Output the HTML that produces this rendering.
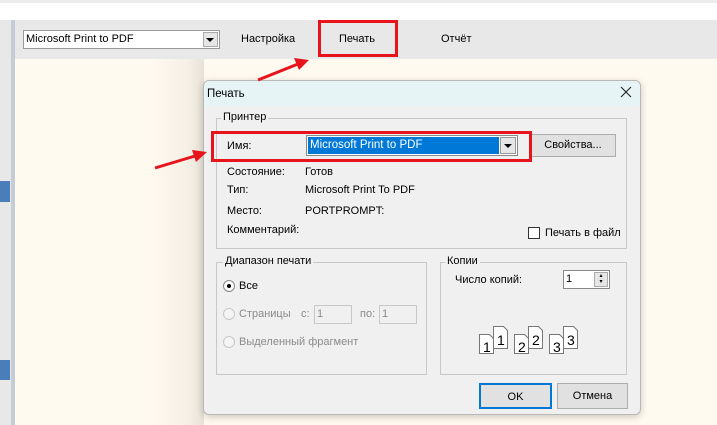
<!DOCTYPE html>
<html><head><meta charset="utf-8"><style>
*{margin:0;padding:0;box-sizing:border-box}
body{width:717px;height:425px;position:relative;overflow:hidden;background:#fffaf0;font-family:"Liberation Sans",sans-serif;font-size:11px;color:#000}
.a{position:absolute}
.t{position:absolute;white-space:nowrap}
.g{color:#8a8a8a}
fieldset{position:absolute;border:1px solid #c8c8c8;border-radius:0}
.lg{position:absolute;background:#f0f0f0;padding:0 2px;top:-8px;left:6px}
.btn{position:absolute;border:1px solid #adadad;background:#e1e1e1;text-align:center}
.rad{position:absolute;width:12px;height:12px;border-radius:50%;border:1px solid #c8c8c8;background:#f4f4f4}
.inp{position:absolute;border:1px solid #c8c8c8;background:#f0f0f0;color:#8a8a8a;padding-left:2px;line-height:17px}
</style></head><body>
<div class="a" style="left:0;top:0;width:717px;height:3px;background:#ececec"></div>
<div class="a" style="left:0;top:3px;width:717px;height:17px;background:#fff"></div>
<div class="a" style="left:0;top:20px;width:717px;height:39px;background:#e8e8e8"></div>
<div class="a" style="left:0;top:59px;width:11px;height:366px;background:#e8e8e8"></div>
<div class="a" style="left:11px;top:20px;width:4px;height:405px;background:#c4ccd4"></div>
<div class="a" style="left:0;top:181px;width:10px;height:21px;background:#4a7ebb"></div>
<div class="a" style="left:0;top:360px;width:10px;height:20px;background:#4a7ebb"></div>
<div class="a" style="left:150px;top:59px;width:54px;height:366px;background:linear-gradient(90deg,rgba(0,0,0,0),rgba(60,50,30,0.05) 70%,rgba(60,50,30,0.12))"></div>
<!-- toolbar -->
<div class="a" style="left:23px;top:30px;width:197px;height:19px;background:#fff;border:1px solid #9a9a9a"></div>
<div class="t" style="left:26px;top:33px">Microsoft Print to PDF</div>
<div class="a" style="left:203px;top:32px;width:15px;height:15px;background:#e6e6e6;border:1px solid #aaa"></div>
<div class="a" style="left:206px;top:38px;border-left:4px solid transparent;border-right:4px solid transparent;border-top:4px solid #000"></div>
<div class="t" style="left:241px;top:33px">Настройка</div>
<div class="t" style="left:339px;top:33px">Печать</div>
<div class="t" style="left:441px;top:33px">Отчёт</div>
<div class="a" style="left:318px;top:20px;width:80px;height:37px;border:3px solid #e8141c"></div>
<!-- dialog -->
<div class="a" style="left:203px;top:80px;width:438px;height:335px;background:#f0f0f0;border:1px solid #b8b8b8;border-radius:6px;box-shadow:0 2px 8px rgba(0,0,0,0.2);overflow:hidden">
<div class="a" style="left:0;top:0;width:438px;height:25px;background:#e6f4f6"></div>
</div>
<div class="t" style="left:207px;top:88px;font-size:11.5px">Печать</div>
<svg class="a" style="left:620px;top:86px" width="12" height="12"><path d="M1 1L11 11M11 1L1 11" stroke="#222" stroke-width="1.1"/></svg>
<fieldset style="left:216px;top:118px;width:411px;height:131px"><span class="lg" style="left:4px">Принтер</span></fieldset>
<div class="t" style="left:227px;top:140px">Имя:</div>
<div class="a" style="left:306px;top:135px;width:212px;height:21px;background:#fff;border:1px solid #888"></div>
<div class="a" style="left:308px;top:137px;width:191px;height:17px;background:#0078d7"></div>
<div class="t" style="left:310px;top:139px;color:#fff;font-size:11.5px">Microsoft Print to PDF</div>
<div class="a" style="left:500px;top:137px;width:16px;height:17px;background:#e6e6e6;border:1px solid #999"></div>
<div class="a" style="left:504px;top:144px;border-left:4px solid transparent;border-right:4px solid transparent;border-top:4px solid #000"></div>
<div class="btn" style="left:530px;top:134px;width:86px;height:23px;line-height:21px">Свойства...</div>
<div class="a" style="left:211px;top:131px;width:321px;height:31px;border:3px solid #e8141c"></div>
<div class="t" style="left:227px;top:166px">Состояние:</div><div class="t" style="left:305px;top:166px">Готов</div>
<div class="t" style="left:227px;top:184px">Тип:</div><div class="t" style="left:305px;top:184px">Microsoft Print To PDF</div>
<div class="t" style="left:227px;top:205px">Место:</div><div class="t" style="left:305px;top:205px">PORTPROMPT:</div>
<div class="t" style="left:227px;top:224px">Комментарий:</div>
<div class="a" style="left:528px;top:227px;width:12px;height:12px;background:#fff;border:1px solid #333"></div>
<div class="t" style="left:545px;top:227px">Печать в файл</div>
<fieldset style="left:216px;top:262px;width:211px;height:113px"><span class="lg">Диапазон печати</span></fieldset>
<div class="rad" style="left:223px;top:280px;background:#fff;border-color:#888"></div>
<div class="a" style="left:227px;top:284px;width:4px;height:4px;border-radius:50%;background:#000"></div>
<div class="t" style="left:239px;top:280px">Все</div>
<div class="rad" style="left:223px;top:308px"></div>
<div class="t g" style="left:239px;top:308px">Страницы</div>
<div class="t g" style="left:301px;top:308px">с:</div>
<div class="inp" style="left:314px;top:305px;width:38px;height:19px">1</div>
<div class="t g" style="left:360px;top:308px">по:</div>
<div class="inp" style="left:379px;top:305px;width:38px;height:19px">1</div>
<div class="rad" style="left:223px;top:336px"></div>
<div class="t g" style="left:239px;top:336px">Выделенный фрагмент</div>
<fieldset style="left:440px;top:262px;width:187px;height:113px"><span class="lg" style="left:4px">Копии</span></fieldset>
<div class="t" style="left:455px;top:274px">Число копий:</div>
<div class="a" style="left:563px;top:270px;width:47px;height:19px;background:#fff;border:1px solid #888"></div>
<div class="t" style="left:566px;top:273px">1</div>
<div class="a" style="left:594px;top:272px;width:14px;height:15px;background:#e6e6e6;border:1px solid #aaa;font-size:6px;line-height:6px;text-align:center">▴<br>▾</div>
<svg class="a" style="left:478px;top:322px" width="102" height="34">
<g font-family="Liberation Sans" font-size="14" stroke="none">
<g transform="translate(0,0)"><path d="M15.5 4.5h10l4 4v18h-14z" fill="#fff" stroke="#777"/><text x="19" y="23">1</text><path d="M1.5 12.5h10l4 4v15h-14z" fill="#fff" stroke="#777"/><text x="5" y="30">1</text></g>
<g transform="translate(35,0)"><path d="M15.5 4.5h10l4 4v18h-14z" fill="#fff" stroke="#777"/><text x="19" y="23">2</text><path d="M1.5 12.5h10l4 4v15h-14z" fill="#fff" stroke="#777"/><text x="5" y="30">2</text></g>
<g transform="translate(70,0)"><path d="M15.5 4.5h10l4 4v18h-14z" fill="#fff" stroke="#777"/><text x="19" y="23">3</text><path d="M1.5 12.5h10l4 4v15h-14z" fill="#fff" stroke="#777"/><text x="5" y="30">3</text></g>
</g></svg>
<div class="btn" style="left:479px;top:383px;width:73px;height:26px;line-height:24px;border:2px solid #0078d7">OK</div>
<div class="btn" style="left:557px;top:383px;width:71px;height:26px;line-height:24px">Отмена</div>
<!-- arrows -->
<svg class="a" style="left:0;top:0" width="717" height="425">
<g stroke="#e8141c" stroke-width="3" fill="#e8141c">
<line x1="258" y1="80" x2="298" y2="64"/><path d="M309 60 L294 58 L299 70z" stroke="none"/>
<line x1="155" y1="168" x2="195" y2="156"/><path d="M207 152 L192 150 L196 162z" stroke="none"/>
</g></svg>
</body></html>
